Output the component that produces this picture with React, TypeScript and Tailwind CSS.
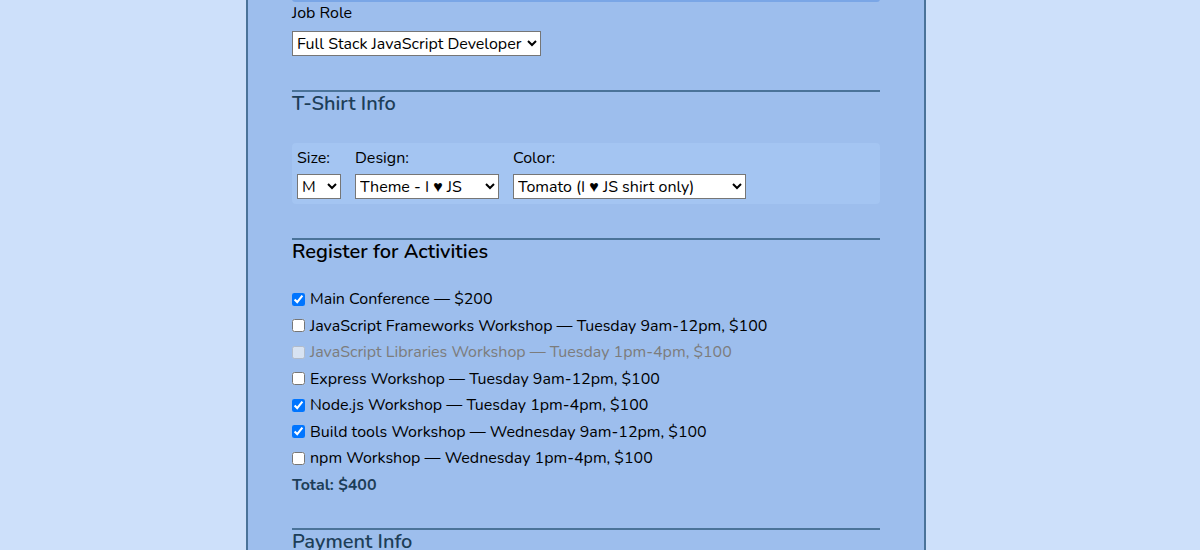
import React from "react";

const activities = [
  { label: "Main Conference — $200", checked: true },
  { label: "JavaScript Frameworks Workshop — Tuesday 9am-12pm, $100", checked: false },
  { label: "JavaScript Libraries Workshop — Tuesday 1pm-4pm, $100", checked: false, disabled: true },
  { label: "Express Workshop — Tuesday 9am-12pm, $100", checked: false },
  { label: "Node.js Workshop — Tuesday 1pm-4pm, $100", checked: true },
  { label: "Build tools Workshop — Wednesday 9am-12pm, $100", checked: true },
  { label: "npm Workshop — Wednesday 1pm-4pm, $100", checked: false },
];

const selectCls =
  "h-[25px] border border-[#767676] bg-white rounded-none text-black text-[16px] leading-[20px] px-0";

const App = () => {
  return (
    <div
      className="h-[550px] overflow-hidden bg-[#cde0fa] text-black"
      style={{ fontFamily: "Nunito, Lato, 'Open Sans', sans-serif" }}
    >
      <div className="flow-root ml-[246px] w-[680px] h-full border-x-2 border-[#4a7399] bg-[#9dbeed] px-[44px]">
        {/* bottom edge of the email field above */}
        <input
          className="block w-full h-[30px] -mt-[28px] bg-white border-2 border-[#7aa6e6] rounded-[3px]"
          readOnly
        />
        <label className="block mt-[1px] text-[16px] leading-[20px]">Job Role</label>
        <select className={`${selectCls} mt-[8px] w-[249px]`} defaultValue="fs">
          <option value="fs">Full Stack JavaScript Developer</option>
        </select>

        <div className="mt-[34px] border-t-2 border-[#4a7399]" />
        <h2 className="text-[20px] leading-[24px] font-semibold text-[#1d3e58]">T-Shirt Info</h2>

        <div className="mt-[27px] flex gap-[14px] bg-[#a4c5f2] rounded-[4px] px-[5px] pt-[6px] pb-[5px]">
          <div className="flex flex-col">
            <span className="text-[16px] leading-[18px] mb-[7px]">Size:</span>
            <select className={`${selectCls} w-[44px]`} defaultValue="m">
              <option value="m">M</option>
            </select>
          </div>
          <div className="flex flex-col">
            <span className="text-[16px] leading-[18px] mb-[7px]">Design:</span>
            <select className={`${selectCls} w-[144px]`} defaultValue="js">
              <option value="js">Theme - I ♥ JS</option>
            </select>
          </div>
          <div className="flex flex-col">
            <span className="text-[16px] leading-[18px] mb-[7px]">Color:</span>
            <select className={`${selectCls} w-[233px]`} defaultValue="tomato">
              <option value="tomato">Tomato (I ♥ JS shirt only)</option>
            </select>
          </div>
        </div>

        <div className="mt-[34px] border-t-2 border-[#4a7399]" />
        <h2 className="text-[20px] leading-[24px] font-semibold">Register for Activities</h2>

        <div className="mt-[22px] flex flex-col">
          {activities.map((a, i) => (
            <label
              key={i}
              className={`flex items-center gap-[5px] h-[26.5px] text-[16px] ${
                a.disabled ? "text-[#7c7c7c]" : ""
              }`}
            >
              <input
                type="checkbox"
                defaultChecked={a.checked}
                disabled={a.disabled}
                className="w-[13px] h-[13px]"
              />
              <span>{a.label}</span>
            </label>
          ))}
        </div>
        <p className="text-[16px] leading-[20px] mt-[3px] font-bold text-[#1d3e58]">Total: $400</p>

        <div className="mt-[33px] border-t-2 border-[#4a7399]" />
        <h2 className="text-[20px] leading-[24px] font-semibold text-[#1d3e58]">Payment Info</h2>
      </div>
    </div>
  );
};

export default App;
